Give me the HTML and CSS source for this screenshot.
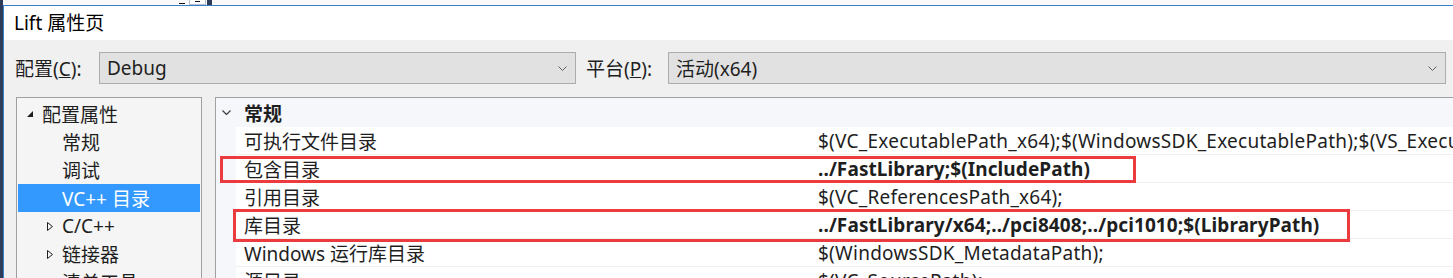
FILE: index.html
```html
<!DOCTYPE html>
<html lang="zh-CN">
<head>
  <meta charset="UTF-8">
  <title>Lift 属性页</title>
  <link rel="stylesheet" href="styles.css">
</head>
<body>
<div class="desk">
  <div class="desk-edge"></div>
  <div class="desk-main">
    <div class="behind">
      <span class="behind-dash"></span>
      <span class="behind-box"><span class="behind-box-bar"></span></span>
      <span class="behind-dark"></span>
    </div>

    <div class="dialog">
      <div class="titlebar">Lift 属性页</div>

      <div class="dialog-body">
        <div class="config-row">
          <label class="config-label">配置(<u>C</u>):</label>
          <div class="combo combo-config">
            <span class="combo-text">Debug</span>
            <svg class="combo-arrow" width="9" height="5" viewBox="0 0 9 5"><polyline points="0.5,0.5 4.5,4.5 8.5,0.5" fill="none" stroke="#606060" stroke-width="1"/></svg>
          </div>
          <label class="config-label platform-label">平台(<u>P</u>):</label>
          <div class="combo combo-platform">
            <span class="combo-text">活动(x64)</span>
            <svg class="combo-arrow" width="9" height="5" viewBox="0 0 9 5"><polyline points="0.5,0.5 4.5,4.5 8.5,0.5" fill="none" stroke="#606060" stroke-width="1"/></svg>
          </div>
        </div>

        <div class="panes">
          <ul class="tree">
            <li class="tree-item level0">
              <span class="twisty"><svg width="6" height="6" viewBox="0 0 6 6"><polygon points="6,0 6,6 0,6" fill="#1e1e1e"/></svg></span>配置属性
            </li>
            <li class="tree-item leaf">常规</li>
            <li class="tree-item leaf">调试</li>
            <li class="tree-item leaf selected">VC++ 目录</li>
            <li class="tree-item level1">
              <span class="twisty"><svg width="6" height="9" viewBox="0 0 6 9"><polygon points="0.5,0.5 5.5,4.5 0.5,8.5" fill="none" stroke="#1e1e1e" stroke-width="1"/></svg></span>C/C++
            </li>
            <li class="tree-item level1">
              <span class="twisty"><svg width="6" height="9" viewBox="0 0 6 9"><polygon points="0.5,0.5 5.5,4.5 0.5,8.5" fill="none" stroke="#1e1e1e" stroke-width="1"/></svg></span>链接器
            </li>
            <li class="tree-item level1">
              <span class="twisty"><svg width="6" height="9" viewBox="0 0 6 9"><polygon points="0.5,0.5 5.5,4.5 0.5,8.5" fill="none" stroke="#1e1e1e" stroke-width="1"/></svg></span>清单工具
            </li>
          </ul>

          <div class="grid">
            <div class="grid-head">
              <span class="gutter"><svg width="9" height="5" viewBox="0 0 9 5"><polyline points="0.5,0.5 4.5,4.5 8.5,0.5" fill="none" stroke="#444" stroke-width="1.3"/></svg></span>
              <span class="head-text">常规</span>
            </div>
            <div class="grid-row">
              <span class="gutter"></span>
              <span class="prop-name">可执行文件目录</span>
              <span class="prop-value">$(VC_ExecutablePath_x64);$(WindowsSDK_ExecutablePath);$(VS_ExecutablePath);$(MSBuild_ExecutablePath);$(FxCopDir);$(PATH);</span>
            </div>
            <div class="grid-row">
              <span class="gutter"></span>
              <span class="prop-name">包含目录</span>
              <span class="prop-value changed">../FastLibrary;$(IncludePath)</span>
            </div>
            <div class="grid-row">
              <span class="gutter"></span>
              <span class="prop-name">引用目录</span>
              <span class="prop-value">$(VC_ReferencesPath_x64);</span>
            </div>
            <div class="grid-row">
              <span class="gutter"></span>
              <span class="prop-name">库目录</span>
              <span class="prop-value changed">../FastLibrary/x64;../pci8408;../pci1010;$(LibraryPath)</span>
            </div>
            <div class="grid-row">
              <span class="gutter"></span>
              <span class="prop-name">Windows 运行库目录</span>
              <span class="prop-value">$(WindowsSDK_MetadataPath);</span>
            </div>
            <div class="grid-row">
              <span class="gutter"></span>
              <span class="prop-name">源目录</span>
              <span class="prop-value">$(VC_SourcePath);</span>
            </div>

            <div class="mark mark-include"></div>
            <div class="mark mark-library"></div>
          </div>
        </div>
      </div>
    </div>
  </div>
</div>
</body>
</html>
```

FILE: styles.css
```css
* {
  margin: 0;
  padding: 0;
  box-sizing: border-box;
}

body {
  width: 1453px;
  height: 278px;
  overflow: hidden;
  background: #f0f0f0;
  color: #1e1e1e;
  font-family: 'Noto Sans', 'Noto Sans CJK SC', sans-serif;
  font-size: 19px;
}

.desk {
  display: flex;
  height: 278px;
}

.desk-edge {
  width: 3px;
  flex: none;
  background: #2d3c58;
}

.desk-main {
  flex: 1;
  display: flex;
  flex-direction: column;
  min-width: 0;
}

/* the window behind the dialog */
.behind {
  height: 5px;
  flex: none;
  display: flex;
  background: #f9f9f9;
}

.behind-dash {
  width: 6px;
  height: 1px;
  margin: 3px 0 0 176px;
  background: #111;
}

.behind-box {
  width: 17px;
  height: 5px;
  margin-left: 4px;
  border: 1px solid #b5bfd6;
  border-top: none;
  background: #fff;
  display: flex;
  justify-content: center;
}

.behind-box-bar {
  width: 5px;
  height: 1px;
  margin-top: 1px;
  background: #111;
}

.behind-dark {
  width: 5px;
  margin-left: 1px;
  background: #2d3c58;
}

.dialog {
  flex: 1;
  border-top: 1px solid #3a80c8;
  border-left: 1px solid #3a80c8;
  display: flex;
  flex-direction: column;
}

.titlebar {
  height: 34px;
  line-height: 35px;
  padding-left: 10px;
  background: #fff;
  color: #000;
}

.dialog-body {
  flex: 1;
  padding-top: 12px;
}

.config-row {
  display: flex;
  align-items: center;
  height: 32px;
  padding-left: 11px;
}

.config-label {
  width: 84px;
  flex: none;
}

.platform-label {
  width: 82px;
  margin-left: 10px;
}

.combo {
  height: 32px;
  display: flex;
  align-items: center;
  justify-content: space-between;
  padding: 0 8px 0 7px;
  background: #e1e1e1;
  border: 1px solid #adadad;
}

.combo-config {
  width: 477px;
  flex: none;
}

.combo-platform {
  flex: 1;
  margin-right: 7px;
}

.panes {
  display: flex;
  margin-top: 13px;
  padding-left: 12px;
  gap: 13px;
  height: 200px;
}

.tree {
  list-style: none;
  width: 186px;
  flex: none;
  padding: 2px 1px 0 1px;
  background: #f5f5f5;
  border: 1px solid #a0a0a0;
  border-bottom: none;
}

.tree-item {
  height: 28px;
  display: flex;
  align-items: center;
  white-space: nowrap;
}

.twisty {
  width: 15px;
  flex: none;
  display: flex;
  align-items: center;
}

.level0 {
  padding-left: 9px;
}

.level1 {
  padding-left: 29px;
}

.leaf {
  padding-left: 44px;
}

.selected {
  background: #3399ff;
  color: #fff;
}

.grid {
  position: relative;
  flex: 1;
  margin-right: -400px;
  background: #fff;
  border: 1px solid #a0a0a0;
  border-bottom: none;
  white-space: nowrap;
  overflow: hidden;
}

.gutter {
  width: 20px;
  flex: none;
  align-self: stretch;
  display: flex;
  align-items: center;
  justify-content: center;
  background: #f5f7fa;
}

.grid-head {
  height: 29px;
  display: flex;
  align-items: center;
  background: #f5f7fa;
}

.head-text {
  padding-left: 8px;
  font-weight: bold;
}

.grid-row {
  height: 28px;
  display: flex;
}

.prop-name,
.prop-value {
  display: flex;
  align-items: center;
  border-bottom: 1px solid #f0f0f0;
}

.prop-name {
  width: 577px;
  flex: none;
  padding-left: 8px;
}

.prop-value {
  flex: 1;
  padding-left: 5px;
  letter-spacing: 0.25px;
}

.changed {
  font-weight: bold;
  letter-spacing: 0.1px;
}

/* red highlight frames drawn over the screenshot */
.mark {
  position: absolute;
  border: 3px solid #ec3b3e;
}

.mark-include {
  left: 4px;
  top: 58px;
  width: 916px;
  height: 27px;
}

.mark-library {
  left: 17px;
  top: 111px;
  width: 1117px;
  height: 33px;
}
```
